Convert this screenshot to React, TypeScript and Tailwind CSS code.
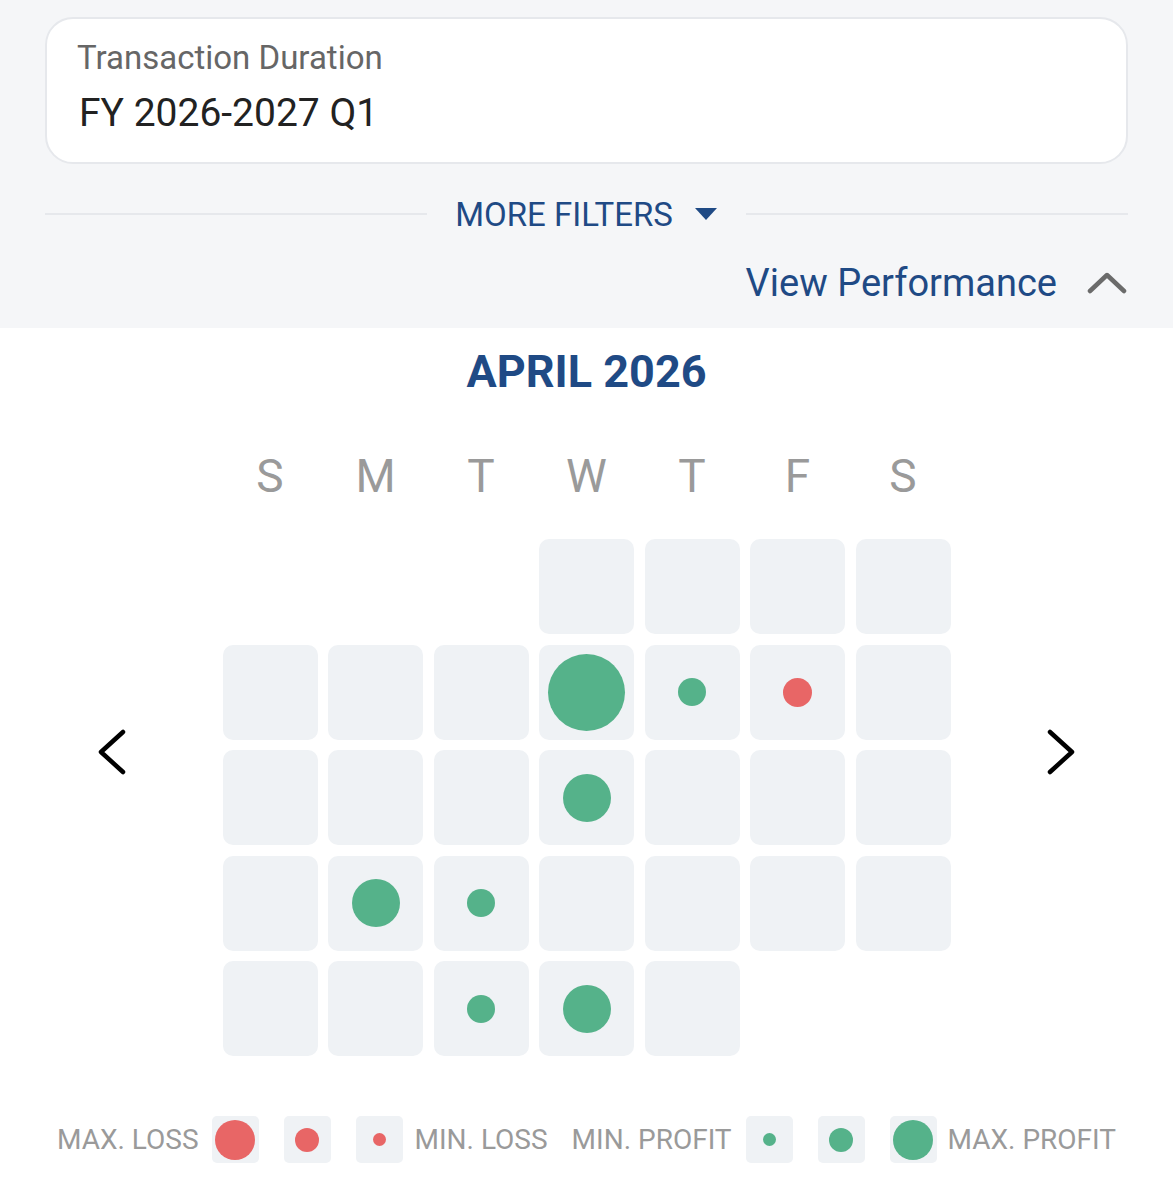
import React from "react";

const G = "#55b28a";
const R = "#e86666";

type Dot = { c: string; d: number } | null;

const days: (Dot | undefined)[] = [
  undefined, undefined, undefined, null, null, null, null,
  null, null, null, { c: G, d: 77 }, { c: G, d: 28 }, { c: R, d: 29 }, null,
  null, null, null, { c: G, d: 48 }, null, null, null,
  null, { c: G, d: 48 }, { c: G, d: 28 }, null, null, null, null,
  null, null, { c: G, d: 28 }, { c: G, d: 48 }, null, undefined, undefined,
];

function Cell({ v }: { v: Dot | undefined }) {
  if (v === undefined) return <div className="w-[95px] h-[95px]" />;
  return (
    <div className="w-[95px] h-[95px] rounded-[10px] bg-[#eff2f5] flex items-center justify-center">
      {v && <div className="rounded-full" style={{ width: v.d, height: v.d, background: v.c }} />}
    </div>
  );
}

function LBox({ c, d }: { c: string; d: number }) {
  return (
    <div className="w-[47px] h-[47px] rounded-[5px] bg-[#eff2f5] flex items-center justify-center">
      <div className="rounded-full" style={{ width: d, height: d, background: c }} />
    </div>
  );
}

export default function App() {
  const font = { fontFamily: "Roboto, 'Noto Sans', sans-serif" };
  return (
    <div className="w-[1173px] h-[1200px] bg-white" style={font}>
      <div className="bg-[#f5f6f8] h-[328px] px-[45px] pt-[17px]">
        <div className="h-[147px] rounded-[28px] bg-white border-2 border-[#e6e8ec] pl-[30px] pt-[19px]">
          <div className="text-[33px] leading-[40px] text-[#666666]">Transaction Duration</div>
          <div className="text-[39px] leading-[50px] mt-[10px] ml-[2px] text-[#222222]">FY 2026-2027 Q1</div>
        </div>
        <div className="flex items-center mt-[30px] h-[40px]">
          <div className="flex-1 h-[2px] bg-[#e6e8ec]" />
          <div className="flex items-center px-[28px] text-[#1f4a85]">
            <span className="text-[33px] leading-none">MORE FILTERS</span>
            <svg width="24" height="14" viewBox="0 0 24 14" className="ml-[21px]">
              <path d="M1 1 L23 1 L12 13 Z" fill="#1f4a85" />
            </svg>
          </div>
          <div className="flex-1 h-[2px] bg-[#e6e8ec]" />
        </div>
        <div className="flex items-center justify-end mt-[27px] h-[44px]">
          <span className="text-[38px] leading-none text-[#1f4a85]">View Performance</span>
          <svg width="40" height="22" viewBox="0 0 40 22" className="ml-[30px] mr-[1px]">
            <path d="M3 19 L20 3 L37 19" fill="none" stroke="#6b6b6b" strokeWidth="4.5" strokeLinecap="round" strokeLinejoin="round" />
          </svg>
        </div>
      </div>

      <div className="text-center font-bold text-[45px] leading-none text-[#1f4a85] mt-[21px]">APRIL 2026</div>

      <div className="flex items-center justify-between px-[91px] mt-[54px]">
        <svg width="40" height="50" viewBox="0 0 40 50">
          <path d="M32 5 L10 25 L32 45" fill="none" stroke="#000" strokeWidth="4.5" strokeLinecap="round" strokeLinejoin="round" />
        </svg>
        <div className="flex flex-col">
          <div className="grid grid-cols-[repeat(7,95px)] gap-x-[10.5px] text-[46px] leading-none text-[#9a9a9a] text-center h-[83px] pt-[5px]">
            {["S", "M", "T", "W", "T", "F", "S"].map((d, i) => (
              <div key={i}>{d}</div>
            ))}
          </div>
          <div className="grid grid-cols-[repeat(7,95px)] gap-[10.5px] mt-[8px]">
            {days.map((v, i) => (
              <Cell key={i} v={v} />
            ))}
          </div>
        </div>
        <svg width="40" height="50" viewBox="0 0 40 50">
          <path d="M8 5 L30 25 L8 45" fill="none" stroke="#000" strokeWidth="4.5" strokeLinecap="round" strokeLinejoin="round" />
        </svg>
      </div>

      <div className="flex items-center justify-center mt-[60px] text-[28px] leading-none text-[#9a9a9a]">
        <span>MAX. LOSS</span>
        <div className="ml-[13px]"><LBox c={R} d={40} /></div>
        <div className="ml-[25px]"><LBox c={R} d={24} /></div>
        <div className="ml-[25px]"><LBox c={R} d={13} /></div>
        <span className="ml-[12px]">MIN. LOSS</span>
        <span className="ml-[24px]">MIN. PROFIT</span>
        <div className="ml-[14px]"><LBox c={G} d={13} /></div>
        <div className="ml-[25px]"><LBox c={G} d={24} /></div>
        <div className="ml-[25px]"><LBox c={G} d={40} /></div>
        <span className="ml-[11px]">MAX. PROFIT</span>
      </div>
    </div>
  );
}
